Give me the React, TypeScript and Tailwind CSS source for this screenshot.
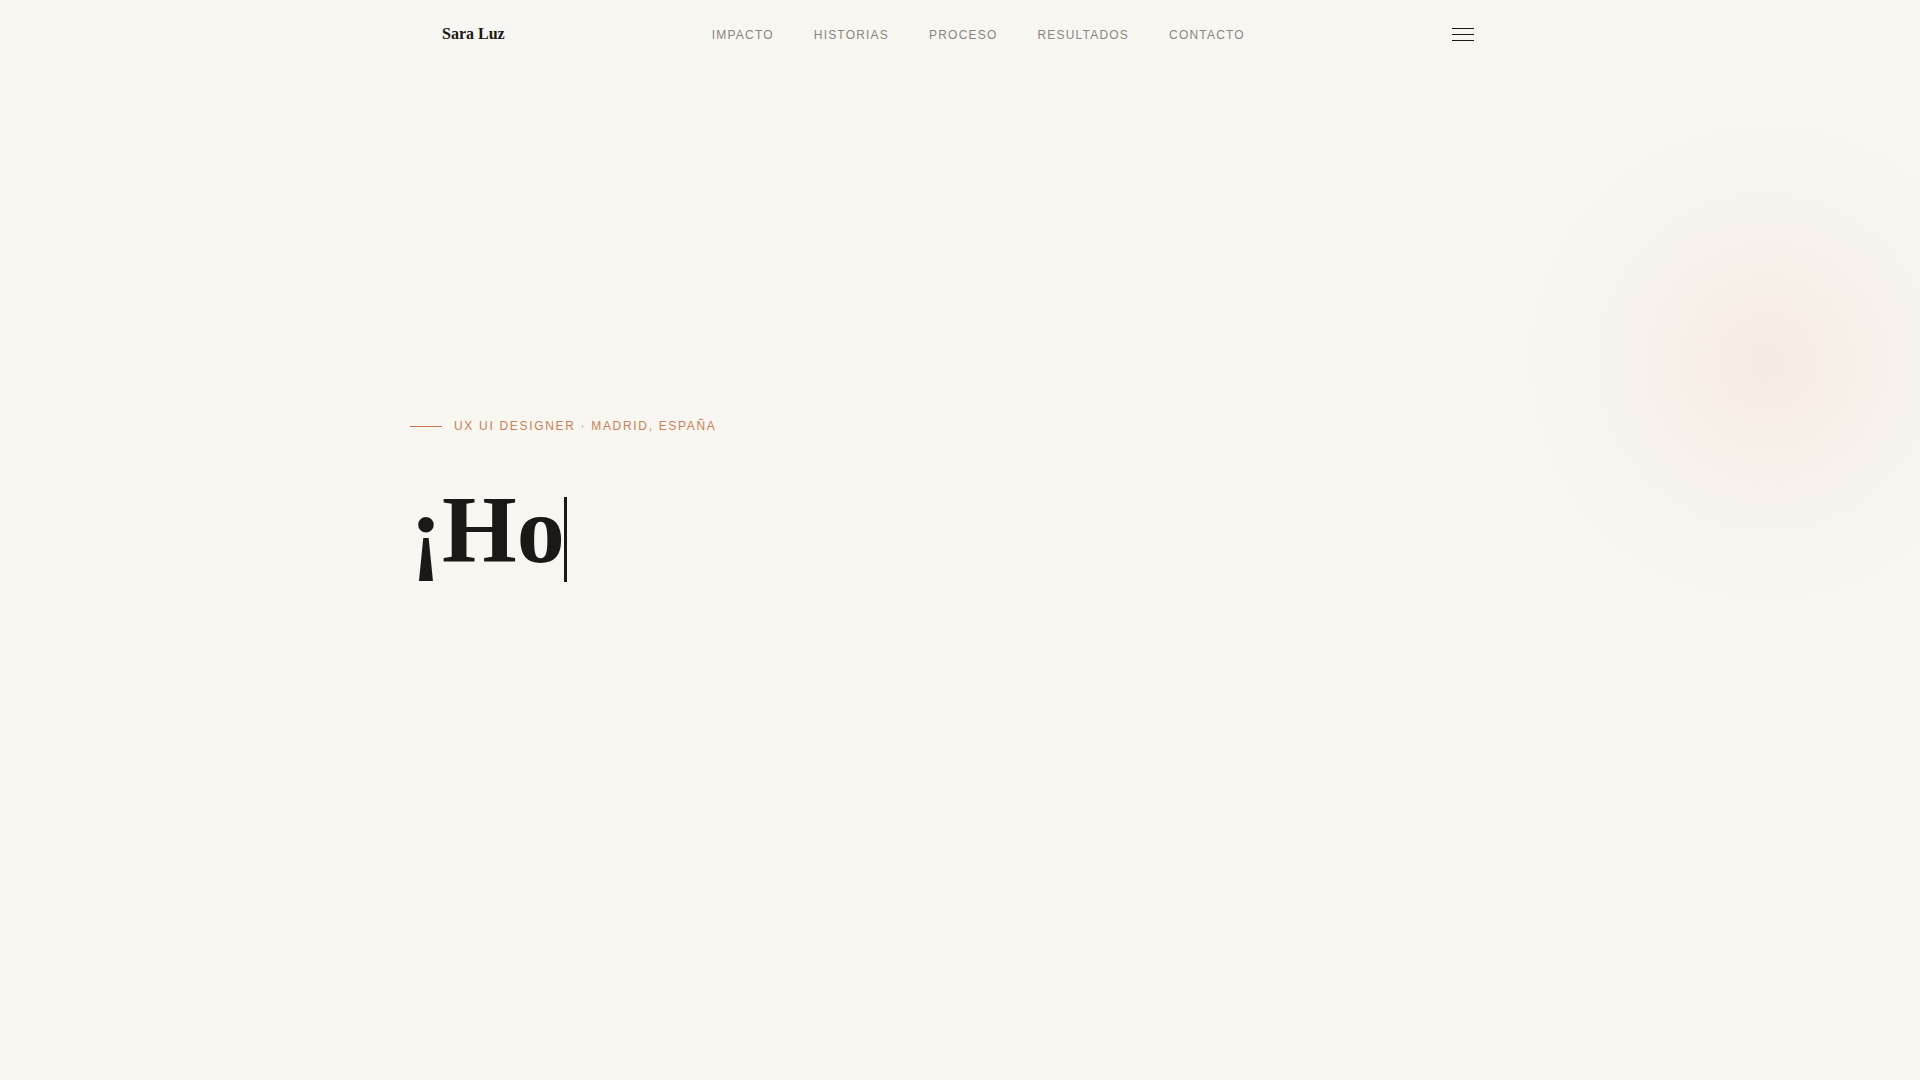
const navItems = ["Impacto", "Historias", "Proceso", "Resultados", "Contacto"];

export default function App() {
  return (
    <div className="relative min-h-screen overflow-hidden bg-[#f8f6f1] font-['Liberation_Sans',Arial,sans-serif] text-[#1b1815]">
      {/* soft blob on the right */}
      <div className="pointer-events-none absolute left-[1527px] top-[122px] h-[480px] w-[480px] rounded-full bg-[radial-gradient(circle,rgba(238,208,194,0.3)_0%,rgba(240,220,206,0.2)_30%,rgba(242,230,220,0.1)_55%,rgba(248,246,241,0)_72%)]" />

      <header className="relative mx-auto flex h-[68px] max-w-[1100px] items-center justify-between pl-8 pr-[36px]">
        <a className="font-['Liberation_Serif','Times_New_Roman',serif] text-base font-bold text-[#1b1815]">
          Sara Luz
        </a>
        <nav className="mt-[2px] flex items-center gap-10">
          {navItems.map((item) => (
            <a
              key={item}
              className="text-xs uppercase tracking-[0.1em] text-[#8a857f]"
            >
              {item}
            </a>
          ))}
        </nav>
        <button className="flex w-[22px] flex-col gap-[5px]">
          <span className="block h-px w-full bg-[#1b1815]" />
          <span className="block h-px w-full bg-[#1b1815]" />
          <span className="block h-px w-full bg-[#1b1815]" />
        </button>
      </header>

      <main className="relative mx-auto max-w-[1100px] pt-[350px]">
        <div className="mb-12 flex items-center gap-3">
          <span className="block h-px w-8 bg-[#c8784c]" />
          <p className="text-xs uppercase leading-4 tracking-[0.14em] text-[#c97f58]">
            UX UI Designer · Madrid, España
          </p>
        </div>
        <h1 className="font-['Liberation_Serif','Times_New_Roman',serif] text-[96px] font-bold leading-none text-[#1b1815]">
          ¡Ho
          <span className="-ml-[1px] inline-block h-[85px] w-[3px] bg-[#1b1815] align-[-20px]" />
        </h1>
      </main>
    </div>
  );
}
